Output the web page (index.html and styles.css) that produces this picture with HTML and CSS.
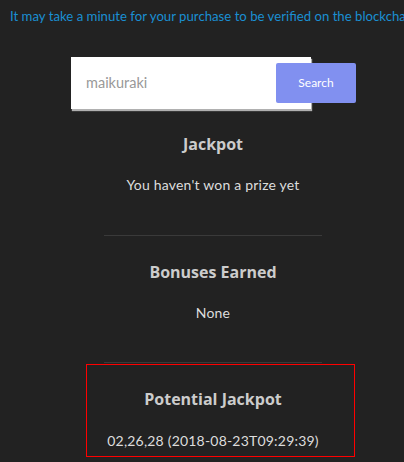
FILE: index.html
```html
<!DOCTYPE html>
<html>
<head>
<meta charset="utf-8">
<link rel="stylesheet" href="styles.css">
</head>
<body>
<p class="notice">It may take a minute for your purchase to be verified on the blockchain.</p>
<div class="wrap">
  <form class="search">
    <div class="input">maikuraki</div>
    <div class="button">Search</div>
  </form>
  <section class="block first">
    <h3 class="title">Jackpot</h3>
    <p class="value">You haven't won a prize yet</p>
  </section>
  <div class="rule"></div>
  <section class="block">
    <h3 class="title">Bonuses Earned</h3>
    <p class="value">None</p>
  </section>
  <div class="rule"></div>
  <section class="block boxed">
    <h3 class="title">Potential Jackpot</h3>
    <p class="value">02,26,28 (2018-08-23T09:29:39)</p>
  </section>
</div>
</body>
</html>
```
FILE: styles.css
```css
html, body {
  margin: 0;
  padding: 0;
  background: #222222;
  overflow: hidden;
}
body {
  font-family: Lato, "Open Sans", sans-serif;
  color: #dddddd;
}
.notice {
  margin: 0;
  padding: 6px 0 0 10px;
  font-size: 13.2px;
  line-height: 20px;
  color: #1a8fd2;
  white-space: nowrap;
  overflow: hidden;
}
.wrap {
  width: 300px;
  margin-left: 63px;
}
.search {
  display: flex;
  align-items: center;
  margin: 31px 0 0 8px;
}
.input {
  width: 225px;
  height: 52px;
  padding-left: 15px;
  background: #ffffff;
  box-shadow: 1px 2px 1px #b0b0b0;
  color: #999999;
  font-size: 14.5px;
  line-height: 52px;
}
.button {
  width: 80px;
  height: 40px;
  margin-left: -35px;
  background: #8190f0;
  border-radius: 2px;
  color: #ffffff;
  font-size: 12px;
  line-height: 40px;
  text-align: center;
}
.block {
  text-align: center;
  padding-top: 26px;
  padding-bottom: 39px;
}
.block.first {
  padding-top: 25px;
  padding-bottom: 40px;
}
.title {
  margin: 0 0 21px;
  font-family: "Open Sans", Lato, sans-serif;
  font-size: 16px;
  line-height: 20px;
  font-weight: bold;
  color: #cccccc;
}
.value {
  margin: 0;
  font-size: 14px;
  line-height: 20px;
  letter-spacing: 0.2px;
}
.rule {
  height: 1px;
  margin: 0 41px;
  background: #3a3a3a;
}
.block.boxed {
  margin: 1px 0 0 23px;
  width: 252px;
  padding: 24px 15px 5px 0;
  border: 1px solid #ff0000;
}
.block.boxed .title {
  margin-bottom: 22px;
}
```
